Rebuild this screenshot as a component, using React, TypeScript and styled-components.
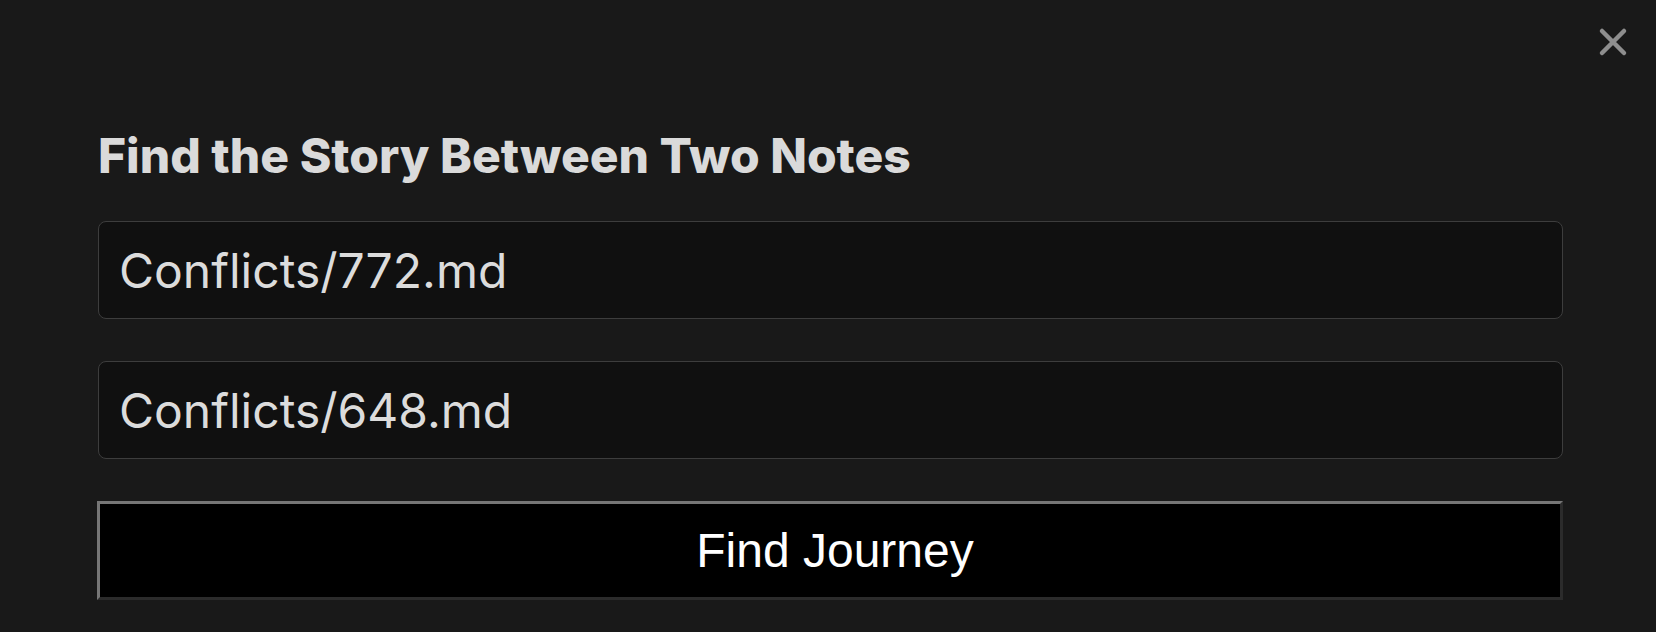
import styled, { createGlobalStyle } from 'styled-components'

const GlobalStyle = createGlobalStyle`
  html, body {
    margin: 0;
    padding: 0;
    background: #191919;
  }
  body {
    font-family: Inter, "Noto Sans", sans-serif;
  }
`

const StyledModal = styled.div`
  position: relative;
  box-sizing: border-box;
  width: 1656px;
  height: 632px;
  padding: 127px 93px 0 97px;
  background: #191919;
  display: flex;
  flex-direction: column;
  overflow: hidden;
`

const StyledClose = styled.button`
  position: absolute;
  top: 25px;
  right: 26px;
  width: 34px;
  height: 34px;
  padding: 0;
  border: none;
  background: transparent;
  display: flex;
  align-items: center;
  justify-content: center;
  color: #8e8e8e;
  cursor: pointer;
`

const StyledTitle = styled.h2`
  margin: 0 0 36px 1px;
  font-family: Inter, sans-serif;
  font-size: 48px;
  font-weight: 800;
  line-height: 58px;
  color: #dadada;
`

const StyledFields = styled.div`
  display: flex;
  flex-direction: column;
  gap: 42px;
`

const StyledInput = styled.input`
  box-sizing: border-box;
  width: 1465px;
  height: 98px;
  margin-left: 1px;
  padding: 0 20px;
  border: 1px solid #3d3d3d;
  border-radius: 8px;
  background: #101010;
  color: #dcdcdc;
  font-family: Inter, sans-serif;
  font-size: 48px;
  outline: none;
`

const StyledButton = styled.button`
  box-sizing: border-box;
  width: 1466px;
  height: 99px;
  padding: 0 0 0 10px;
  border-style: solid;
  border-width: 3px;
  border-color: #767676 #2b2b2b #2b2b2b #767676;
  background: #000;
  color: #fff;
  font-family: "Liberation Sans", Arial, sans-serif;
  font-size: 48px;
  cursor: pointer;
`

const CloseIcon = () => (
  <svg width="30" height="30" viewBox="0 0 30 30" fill="none">
    <path d="M4 4 L26 26 M26 4 L4 26" stroke="currentColor" strokeWidth="4.5" strokeLinecap="round" />
  </svg>
)

export default function App() {
  return (
    <>
      <GlobalStyle />
      <StyledModal>
        <StyledClose aria-label="Close">
          <CloseIcon />
        </StyledClose>
        <StyledTitle>Find the Story Between Two Notes</StyledTitle>
        <StyledFields>
          <StyledInput defaultValue="Conflicts/772.md" />
          <StyledInput defaultValue="Conflicts/648.md" />
          <StyledButton>Find Journey</StyledButton>
        </StyledFields>
      </StyledModal>
    </>
  )
}
